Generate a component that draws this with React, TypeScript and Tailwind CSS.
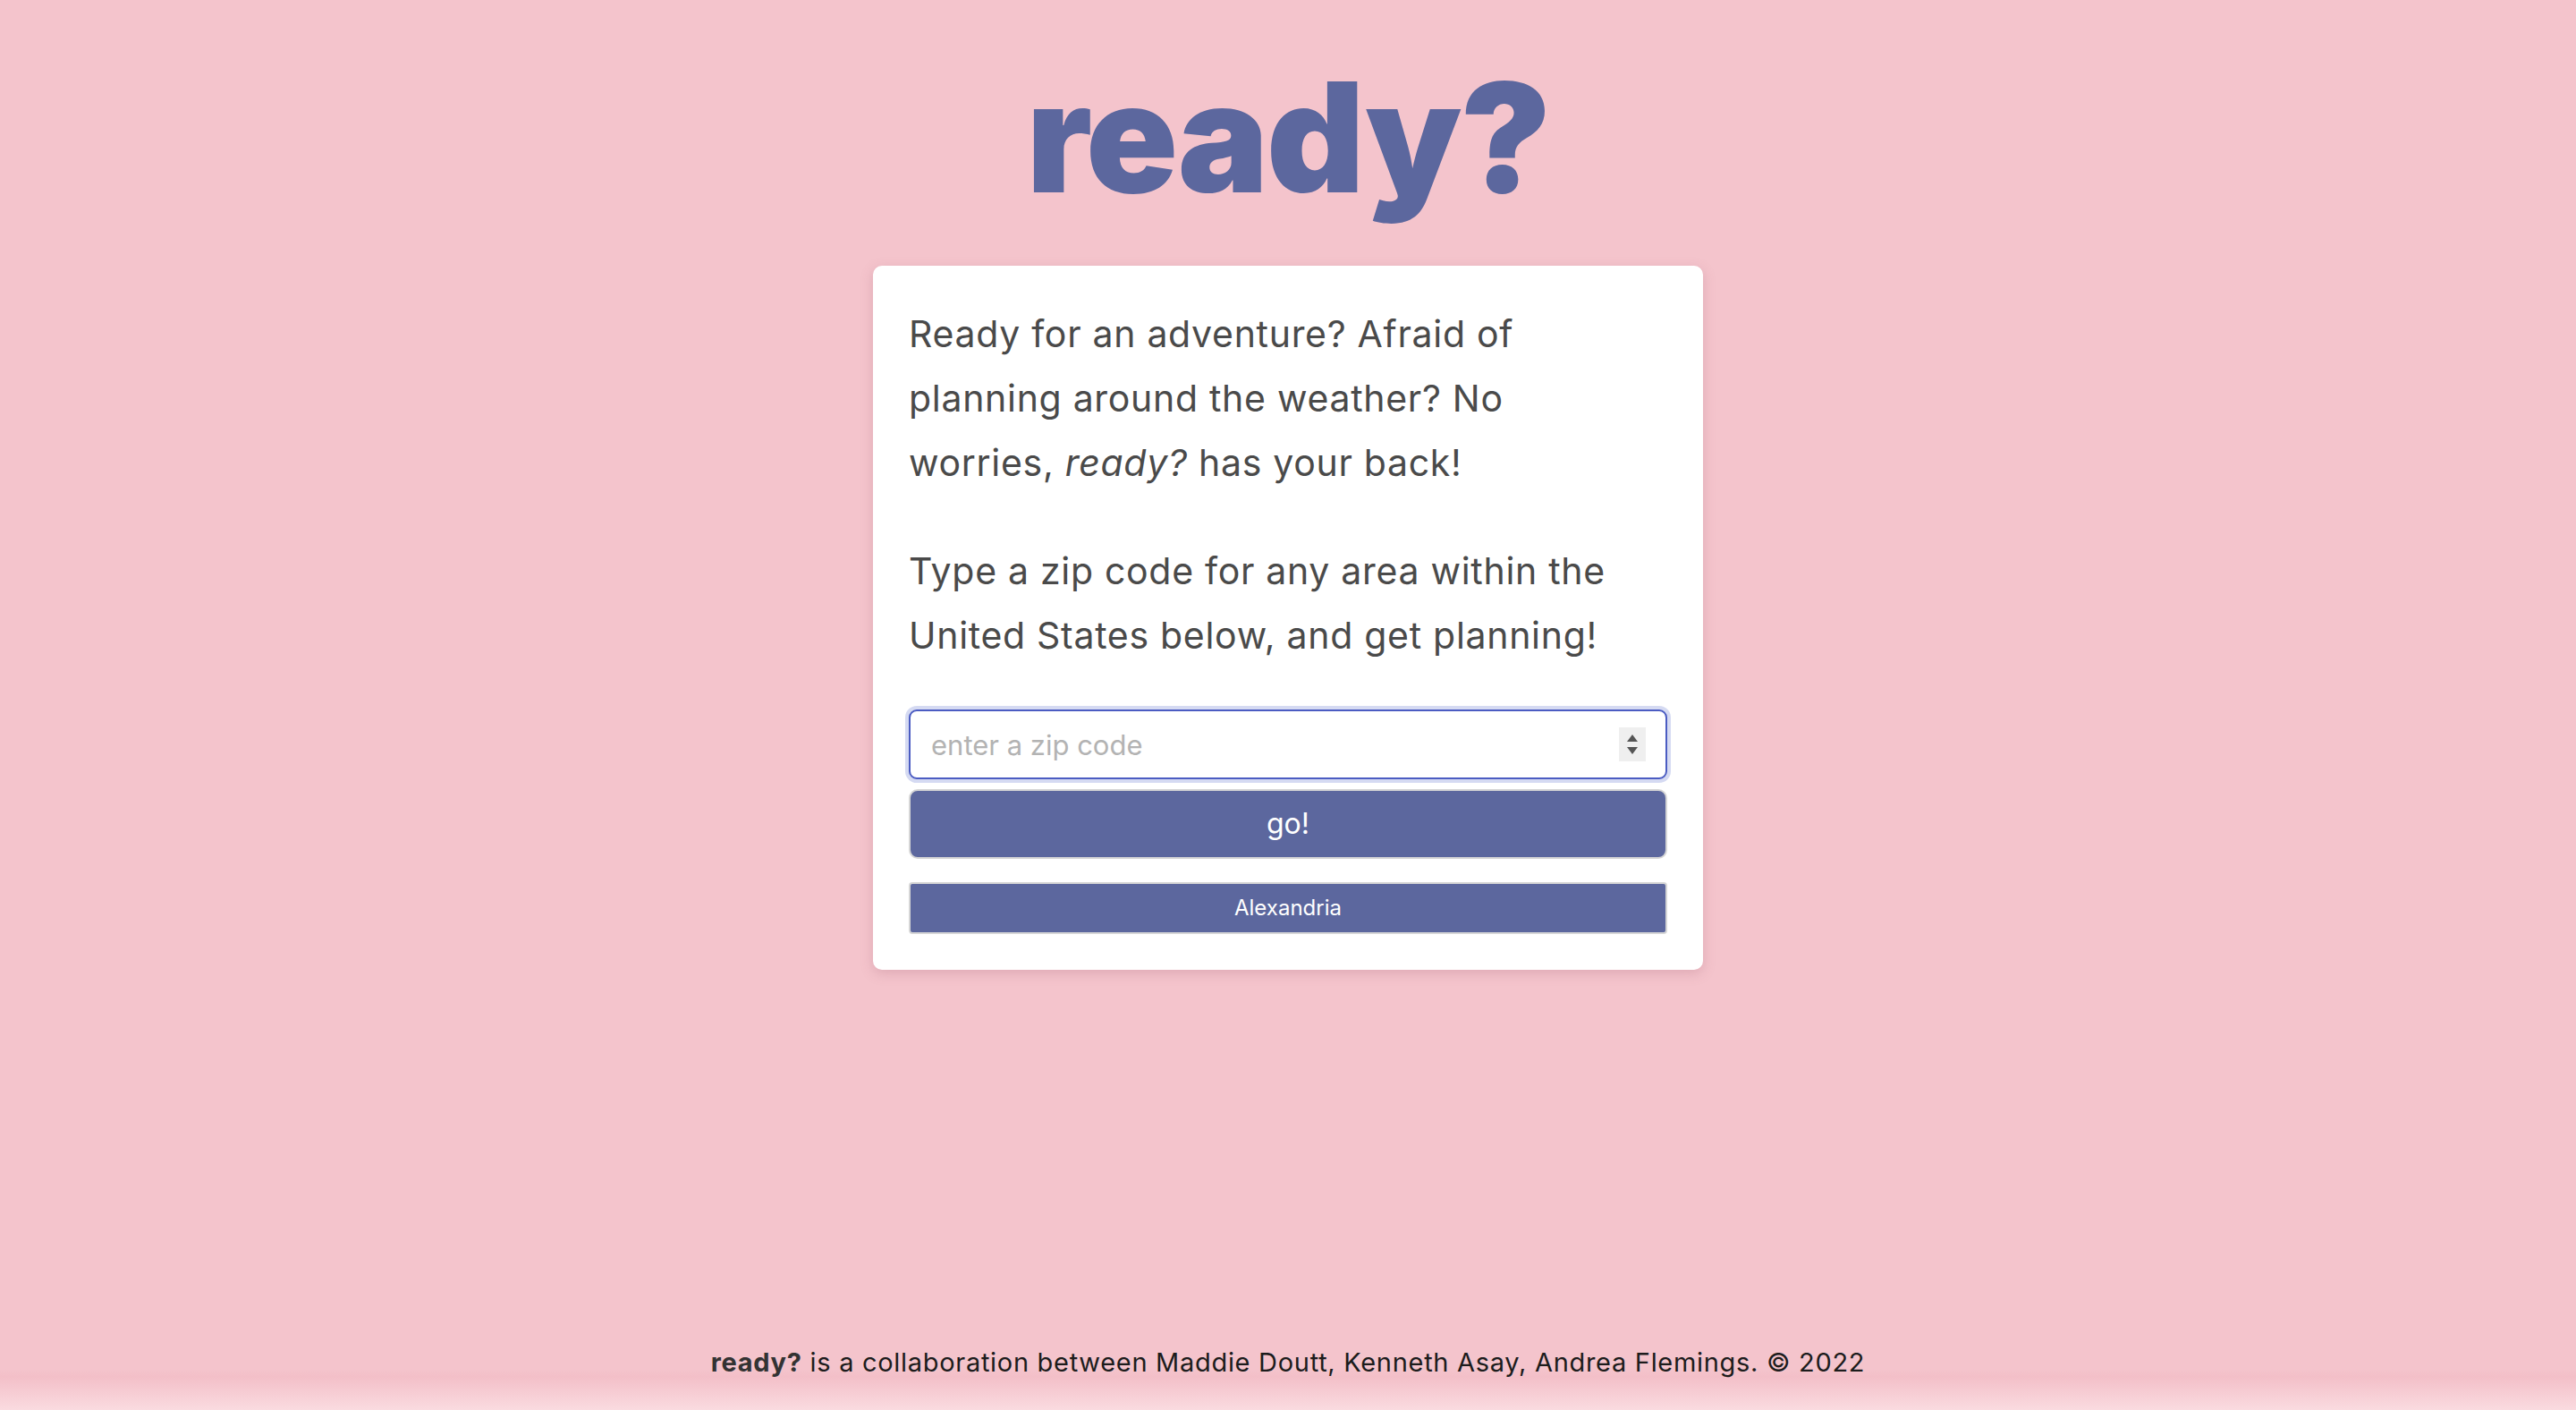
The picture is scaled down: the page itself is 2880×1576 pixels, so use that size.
import React from "react";

export default function App() {
  return (
    <div
      className="min-h-screen w-full flex flex-col items-center bg-[#f4c4cc]"
      style={{ fontFamily: "Inter, 'Noto Sans', sans-serif" }}
    >
      <h1 className="mt-[69px] h-[168px] text-[170px] leading-[168px] font-black tracking-[-2px] text-[#5c679e]">
        ready?
      </h1>
      <div className="mt-[60px] w-[928px] bg-white rounded-[10px] shadow-[0_4px_14px_rgba(160,90,110,0.25)] p-10">
        <p className="text-[41px] leading-[72px] text-[#4a4a4a] tracking-[0.7px]">
          Ready for an adventure? Afraid of
          <br />
          planning around the weather? No
          <br />
          worries, <em>ready?</em> has your back!
        </p>
        <p className="mt-[49px] text-[41px] leading-[72px] text-[#4a4a4a] tracking-[0.7px]">
          Type a zip code for any area within the United States below, and get planning!
        </p>
        <div className="mt-[47px] relative">
          <input
            type="text"
            placeholder="enter a zip code"
            className="w-full h-[78px] rounded-[9px] border-2 border-[#4b5cc2] ring-4 ring-[#d5daf2] outline-none pl-[23px] pr-[60px] text-[31px] text-[#333] placeholder:text-[#b3b3b3] bg-white"
          />
          <div className="absolute right-[24px] top-[20px] w-[30px] h-[38px] bg-[#efefef] flex flex-col items-center justify-center gap-[6px]">
            <div className="w-0 h-0 border-l-[6px] border-r-[6px] border-b-[8px] border-l-transparent border-r-transparent border-b-[#555]" />
            <div className="w-0 h-0 border-l-[6px] border-r-[6px] border-t-[8px] border-l-transparent border-r-transparent border-t-[#555]" />
          </div>
        </div>
        <button className="mt-[11px] w-full h-[78px] rounded-[10px] border-2 border-[#d6d6d6] bg-[#5c679e] text-white text-[32px] leading-none">
          go!
        </button>
        <button className="mt-[26px] w-full h-[58px] rounded-[4px] border-2 border-[#d6d6d6] bg-[#5c679e] text-white text-[24px] leading-none">
          Alexandria
        </button>
      </div>
      <footer className="mt-auto w-full flex justify-center pb-[33px] bg-[linear-gradient(to_bottom,#f4c4cc_0%,#f4c4cc_45%,#f3bfc8_55%,#fadbe0_100%)] pt-[10px]">
        <p className="text-[29px] leading-[40px] text-[#1c1c1c] tracking-[0.7px]">
          <span className="font-bold text-[#333]">ready?</span> is a collaboration between Maddie Doutt, Kenneth Asay, Andrea Flemings. © 2022
        </p>
      </footer>
    </div>
  );
}
